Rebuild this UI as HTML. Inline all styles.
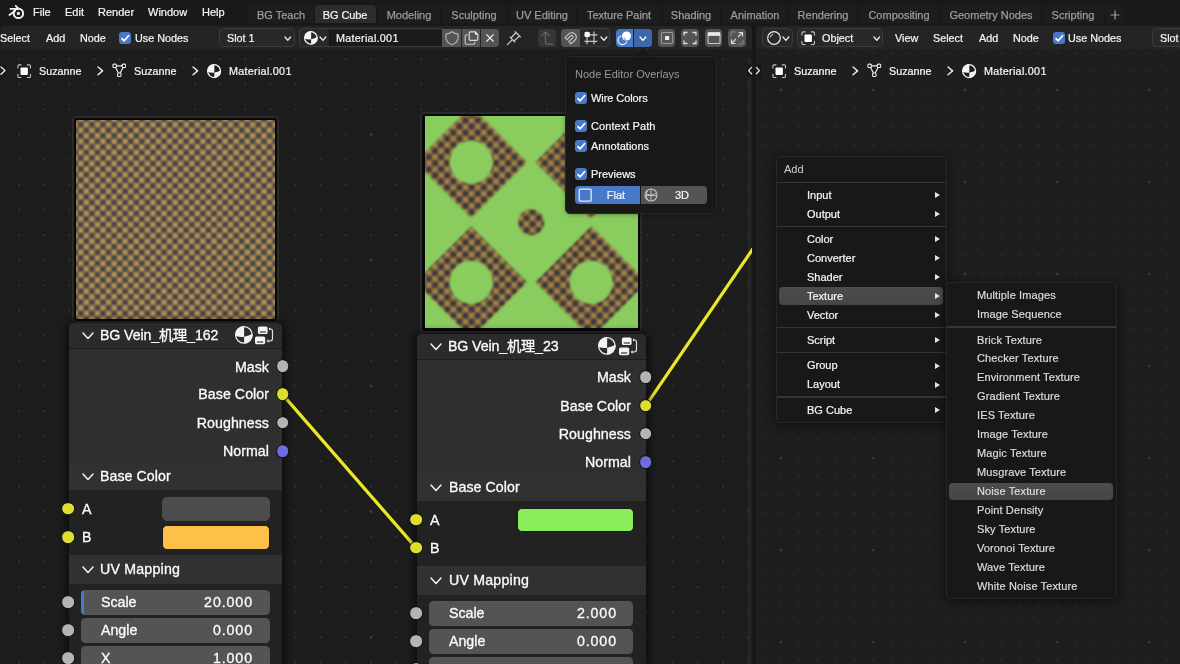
<!DOCTYPE html>
<html lang="en"><head><meta charset="utf-8"><title>Blender Node Editor</title>
<style>
*{box-sizing:border-box;margin:0;padding:0}
html,body{width:1180px;height:664px;overflow:hidden;background:#1d1d1d}
body{position:relative;font-family:"Liberation Sans","Noto Sans CJK SC",sans-serif;font-size:11px;color:#e6e6e6}
.a{position:absolute}
.t,.tr,.tc{position:absolute;white-space:nowrap;line-height:1;will-change:transform}
.t{transform:translateY(-50%)}
.tr{transform:translate(-100%,-50%)}
.tc{transform:translate(-50%,-50%)}
.h{font-size:10.8px;color:#f4f4f4;-webkit-text-stroke:0.22px #f4f4f4}
.m{color:#f4f4f4;-webkit-text-stroke:0.22px #f4f4f4}
.tabt{color:#9c9c9c;-webkit-text-stroke:0.25px #9c9c9c}
#top{left:0;top:0;width:1180px;height:27px;background:#191919}
.tab{position:absolute;top:5px;height:18px;border-radius:4px 4px 0 0;background:#1d1d1d}
.tab.on{background:#2c2c2c}
.hdr{position:absolute;top:26px;height:24px;background:#242424;border-bottom:0.6px solid #1f1f1f}
.ed{position:absolute;top:50px;height:614px;overflow:hidden}
.btn{position:absolute;background:#545454}
.dd{position:absolute;background:#282828;border:1.2px solid #3b3b3b;border-radius:4.5px}
.cb{position:absolute;width:12.4px;height:12.4px;border-radius:3px;background:#4878c8}
.node{position:absolute;background:#2f2f2f;border-radius:5px 5px 0 0;box-shadow:0 1px 9px 3px rgba(0,0,0,.6)}
.nh{position:absolute;left:0;right:0;top:0;height:25.6px;background:#2b2b2b;border-radius:5px 5px 0 0;border-bottom:1.4px solid #1d1d1d}
.ph{position:absolute;left:0;right:0;background:#313131}
.pc{position:absolute;left:0;right:0;background:#222222}
.nt{font-size:14.2px;color:#fcfcfc;-webkit-text-stroke:0.3px #fcfcfc}
.sock{position:absolute;width:13.7px;height:13.7px;border-radius:50%;border:1.25px solid #0b0b0b;transform:translate(-50%,-50%)}
.fld{position:absolute;background:#545454;border-radius:4.5px}
.menu{position:absolute;background:#181818;border:1px solid #272727;border-radius:4px;box-shadow:0 2px 9px 2px rgba(0,0,0,.4)}
.sep{position:absolute;height:1.4px;background:#363636}
.hl{position:absolute;background:linear-gradient(#4c4c4c,#464646);border-radius:4px}
.mi{color:#f4f4f4;-webkit-text-stroke:0.22px #f4f4f4}
.si{color:#dcdcdc;-webkit-text-stroke:0.2px #dcdcdc}
.arr{position:absolute;width:0;height:0;border-left:5.2px solid #e6e6e6;border-top:3.2px solid transparent;border-bottom:3.2px solid transparent;transform:translateY(-50%)}
.pv{position:absolute;background:#080808;border:2.3px solid #2a2a2a;border-radius:4.5px}
</style></head>
<body>
<div id="top" class="a"></div>
<svg class="a" style="left:8px;top:4px;" width="18" height="16" viewBox="0 0 18 16"><path d="M1.4 10.9 L7 6.9 M2.4 4.9 H8.6 M7.7 1.8 L10.4 4.6" fill="none" stroke="#f0f0f0" stroke-width="1.8" stroke-linecap="round" stroke-linejoin="round"/><circle cx="10.4" cy="9.4" r="4.7" fill="none" stroke="#f0f0f0" stroke-width="2"/><circle cx="10.4" cy="9.4" r="1.6" fill="#f0f0f0"/></svg>
<div class="t m" style="left:33px;top:12.1px;">File</div>
<div class="t m" style="left:65px;top:12.1px;">Edit</div>
<div class="t m" style="left:98px;top:12.1px;">Render</div>
<div class="t m" style="left:148px;top:12.1px;">Window</div>
<div class="t m" style="left:202px;top:12.1px;">Help</div>
<div class="tab" style="left:247.5px;top:5px;width:66.5px;height:18px;"></div>
<div class="tc tabt" style="left:280.75px;top:14.7px;">BG Teach</div>
<div class="tab on" style="left:315px;top:5px;width:61px;height:18px;"></div>
<div class="tc m" style="left:345.1px;top:14.7px;letter-spacing:-0.1px;">BG Cube</div>
<div class="tab" style="left:378px;top:5px;width:62px;height:18px;"></div>
<div class="tc tabt" style="left:409.0px;top:14.7px;">Modeling</div>
<div class="tab" style="left:442px;top:5px;width:64px;height:18px;"></div>
<div class="tc tabt" style="left:473.5px;top:14.7px;">Sculpting</div>
<div class="tab" style="left:508px;top:5px;width:68px;height:18px;"></div>
<div class="tc tabt" style="left:542.0px;top:14.7px;">UV Editing</div>
<div class="tab" style="left:578px;top:5px;width:83px;height:18px;"></div>
<div class="tc tabt" style="left:619.1px;top:14.7px;">Texture Paint</div>
<div class="tab" style="left:663px;top:5px;width:57px;height:18px;"></div>
<div class="tc tabt" style="left:690.7px;top:14.7px;">Shading</div>
<div class="tab" style="left:722px;top:5px;width:66px;height:18px;"></div>
<div class="tc tabt" style="left:754.7px;top:14.7px;">Animation</div>
<div class="tab" style="left:790px;top:5px;width:67px;height:18px;"></div>
<div class="tc tabt" style="left:823.3px;top:14.7px;">Rendering</div>
<div class="tab" style="left:859px;top:5px;width:80px;height:18px;"></div>
<div class="tc tabt" style="left:898.6px;top:14.7px;">Compositing</div>
<div class="tab" style="left:941px;top:5px;width:100px;height:18px;"></div>
<div class="tc tabt" style="left:990.5px;top:14.7px;">Geometry Nodes</div>
<div class="tab" style="left:1043px;top:5px;width:61px;height:18px;"></div>
<div class="tc tabt" style="left:1072.8px;top:14.7px;">Scripting</div>
<div class="tab" style="left:1106px;top:5px;width:18px;height:18px;"></div>
<svg class="a" style="left:1109px;top:8.8px;" width="12" height="12" viewBox="0 0 12 12"><path d="M6 1.6V10.4M1.6 6H10.4" stroke="#a0a0a0" stroke-width="1.2" fill="none"/></svg>
<div class="ed" style="left:0;width:752px;background-color:#1d1d1d;background-image:radial-gradient(circle at 50% 50%, #464646 0, #464646 0.8px, transparent 1.3px),radial-gradient(circle at 50% 50%, #313131 0, #313131 0.7px, transparent 1.2px);background-size:125.75px 125.75px,25.15px 25.15px;background-position:308.23px 21.57px,6.43px -3.57px;"></div>
<div class="ed" style="left:756px;width:424px;background-color:#1e1e1e;background-image:radial-gradient(circle at 50% 50%, #444444 0, #444444 0.8px, transparent 1.3px),radial-gradient(circle at 50% 50%, #2f2f2f 0, #2f2f2f 0.7px, transparent 1.2px);background-size:92.10000000000001px 92.10000000000001px,18.42px 18.42px;background-position:255.05px -6.25px,15.64px -6.16px;"></div>
<div class="a" style="left:752px;top:26px;width:4px;height:638px;background:#171717"></div>
<div class="a" style="left:747.7px;top:58px;width:3.8px;height:606px;background:#262626;border-radius:2px 2px 0 0"></div>
<div class="hdr" style="left:0.5px;width:751.5px;border-radius:4px 5px 0 0"></div>
<div class="hdr" style="left:756px;width:424px;border-radius:5px 0 0 0"></div>
<div class="t h" style="left:0px;top:37.9px;">Select</div>
<div class="t h" style="left:45.6px;top:37.9px;">Add</div>
<div class="t h" style="left:79.7px;top:37.9px;">Node</div>
<div class="cb" style="left:118.7px;top:31.7px"><svg width="12.4" height="12.4" viewBox="0 0 13 13" style="display:block"><path d="M3.1 6.9 L5.5 9.2 L10 3.9" fill="none" stroke="#fff" stroke-width="1.8" stroke-linecap="round" stroke-linejoin="round"/></svg></div>
<div class="t h" style="left:134.6px;top:37.9px;">Use Nodes</div>
<div class="dd" style="left:219.2px;top:28.4px;width:75.4px;height:18.8px;"></div>
<div class="t h" style="left:226.7px;top:37.9px;">Slot 1</div>
<svg class="a" style="left:283.2px;top:35.199999999999996px;" width="9.6" height="7.2" viewBox="0 0 9.6 7.2"><path d="M2 2 L4.8 5.2 L7.6 2" fill="none" stroke="#e6e6e6" stroke-width="1.4" stroke-linecap="round" stroke-linejoin="round"/></svg>
<div class="dd" style="left:299px;top:28.4px;width:143px;height:18.8px;border-radius:4px 0 0 4px"></div>
<div class="a" style="left:330.2px;top:29.6px;width:112px;height:16.4px;background:#1a1a1a"></div>
<svg class="a" style="left:302.6px;top:30.0px;" width="15.8" height="15.8" viewBox="0 0 15.8 15.8"><circle cx="7.9" cy="7.9" r="6.25" fill="none" stroke="#f4f4f4" stroke-width="1.3"/><path d="M8.1 9.35 L8.1 1.2999999999999998 A6.6000000000000005 6.6000000000000005 0 0 0 1.2999999999999998 7.9 L1.50 8.56 Q4.93 10.08 8.1 9.35 Z" fill="#f4f4f4"/><path d="M8.1 9.35 Q11.86 8.69 14.43 7.11 A6.6000000000000005 6.6000000000000005 0 0 1 8.1 14.5 Z" fill="#f4f4f4"/></svg>
<svg class="a" style="left:318.1px;top:34.99999999999999px;" width="9.8" height="7.4" viewBox="0 0 9.8 7.4"><path d="M2 2 L4.9 5.4 L7.8 2" fill="none" stroke="#e6e6e6" stroke-width="1.4" stroke-linecap="round" stroke-linejoin="round"/></svg>
<div class="a" style="left:329.2px;top:29.6px;width:1px;height:16.4px;background:#141414"></div>
<div class="t h" style="left:335.7px;top:37.9px;letter-spacing:0.27px;">Material.001</div>
<div class="btn" style="left:442.4px;top:29.2px;width:18.6px;height:17.5px;"></div>
<div class="btn" style="left:461.9px;top:29.2px;width:18.1px;height:17.5px;"></div>
<div class="btn" style="left:481px;top:29.2px;width:18.2px;height:17.5px;border-radius:0 4px 4px 0"></div>
<svg class="a" style="left:443.5px;top:30px;" width="16" height="16" viewBox="0 0 16 16"><path d="M8 1.7 Q10.6 3.9 14 4.1 V8 Q14 12.3 8 14.7 Q2 12.3 2 8 V4.1 Q5.4 3.9 8 1.7 Z" fill="none" stroke="#b4b4b4" stroke-width="1.15" stroke-linejoin="round"/></svg>
<svg class="a" style="left:462.6px;top:30px;" width="17" height="16" viewBox="0 0 17 16"><path d="M4.6 4.8H3.4Q2.2 4.8 2.2 6V13Q2.2 14.2 3.4 14.2H10.6Q11.8 14.2 11.8 13V12" fill="none" stroke="#c4c4c4" stroke-width="1.15"/><path d="M7.4 1.8H12.2L14.8 4.4V9.2Q14.8 10.4 13.6 10.4H7.4Q6.2 10.4 6.2 9.2V3Q6.2 1.8 7.4 1.8Z" fill="none" stroke="#dcdcdc" stroke-width="1.15" stroke-linejoin="round"/><path d="M12 1.6L15 4.7H12Z" fill="#f0f0f0"/></svg>
<svg class="a" style="left:482px;top:30px;" width="16" height="16" viewBox="0 0 16 16"><path d="M4.7 4.6L11.3 11.2M11.3 4.6L4.7 11.2" fill="none" stroke="#ececec" stroke-width="1.25" stroke-linecap="round"/></svg>
<svg class="a" style="left:505px;top:29px;" width="18" height="18" viewBox="0 0 18 18"><path d="M2.5 15.5L7 11M5 8.2L9.8 13M6 9L11 3.5L14.5 7L9 12M10.2 2.6L15.4 7.8" fill="none" stroke="#c8c8c8" stroke-width="1.2" stroke-linecap="round" stroke-linejoin="round"/></svg>
<div class="btn" style="left:538.2px;top:29.2px;width:17.8px;height:17.5px;border-radius:4px;background:#363636"></div>
<svg class="a" style="left:539.2px;top:30px;" width="16" height="16" viewBox="0 0 16 16"><path d="M2.6 5.6L6.5 1.9L10.4 5.6M6.5 2.2V12.4Q6.5 14.2 8.3 14.2H13.6" fill="none" stroke="#646464" stroke-width="1.25" stroke-linecap="round" stroke-linejoin="round"/></svg>
<div class="btn" style="left:561.4px;top:29.2px;width:18.2px;height:17.5px;border-radius:4px 0 0 4px"></div>
<svg class="a" style="left:561.3px;top:28.7px;" width="18.4" height="18.4" viewBox="0 0 16 16"><path d="M3.5 7.5L6.8 4.3Q9.6 1.8 12.2 4.4Q14.6 7.1 12 9.8L8.7 13L6.8 11L10 7.9Q11 6.8 10.1 5.9Q9.2 5.2 8.3 6L5.3 9.3Z" fill="none" stroke="#c8c8c8" stroke-width="1.0" stroke-linejoin="round"/></svg>
<div class="dd" style="left:579.6px;top:28.4px;width:30.2px;height:18.8px;border-radius:0 4px 4px 0;border-left:none"></div>
<svg class="a" style="left:583px;top:30px;" width="16" height="16" viewBox="0 0 16 16"><path d="M1.4 4.8H14.4M1.4 11.4H14.4M4 1.4V14.6M11 1.4V14.6" fill="none" stroke="#c8c8c8" stroke-width="1.15"/><rect x="1.6" y="2" width="5.2" height="5" rx="0.8" fill="#f4f4f4"/></svg>
<svg class="a" style="left:599.0px;top:35.099999999999994px;" width="9.8" height="7.4" viewBox="0 0 9.8 7.4"><path d="M2 2 L4.9 5.4 L7.8 2" fill="none" stroke="#e6e6e6" stroke-width="1.4" stroke-linecap="round" stroke-linejoin="round"/></svg>
<div class="btn" style="left:615.6px;top:29.2px;width:17.6px;height:17.5px;border-radius:4px 0 0 4px;background:#4878c8"></div>
<div class="btn" style="left:633.8px;top:29.2px;width:18px;height:17.5px;border-radius:0 4px 4px 0;background:#3f68ab"></div>
<svg class="a" style="left:616px;top:30px;" width="17" height="16" viewBox="0 0 17 16"><circle cx="6.4" cy="10.2" r="4.4" fill="none" stroke="#f0f4fc" stroke-width="1.2"/><circle cx="10.5" cy="6" r="5.6" fill="#4878c8"/><circle cx="10.5" cy="6" r="4.6" fill="#fff"/><path d="M7.6 7.4Q9.4 8.6 9.2 10" fill="none" stroke="#4878c8" stroke-width="0.9"/></svg>
<svg class="a" style="left:637.5px;top:34.99999999999999px;" width="9.8" height="7.4" viewBox="0 0 9.8 7.4"><path d="M2 2 L4.9 5.4 L7.8 2" fill="none" stroke="#fff" stroke-width="1.4" stroke-linecap="round" stroke-linejoin="round"/></svg>
<div class="btn" style="left:657.6px;top:29.2px;width:17.8px;height:17.5px;border-radius:4px"></div>
<div class="btn" style="left:681px;top:29.2px;width:17.8px;height:17.5px;border-radius:4px"></div>
<div class="btn" style="left:704.6px;top:29.2px;width:17.8px;height:17.5px;border-radius:4px"></div>
<div class="btn" style="left:728px;top:29.2px;width:17.8px;height:17.5px;border-radius:4px"></div>
<svg class="a" style="left:658.5px;top:30px;" width="16" height="16" viewBox="0 0 16 16"><rect x="2.5" y="2.5" width="11.2" height="11" rx="1.5" fill="none" stroke="#9a9a9a" stroke-width="1.1"/><rect x="6.1" y="6" width="4" height="4" fill="#f0f0f0"/></svg>
<svg class="a" style="left:681.9px;top:30px;" width="16" height="16" viewBox="0 0 16 16"><path d="M2 5.5V2.5H5.5M10.5 2.5H14V5.5M14 10.5V13.5H10.5M5.5 13.5H2V10.5" fill="none" stroke="#e0e0e0" stroke-width="1.3"/></svg>
<svg class="a" style="left:705.5px;top:30px;" width="16" height="16" viewBox="0 0 16 16"><rect x="2" y="2.5" width="12" height="11" rx="1" fill="none" stroke="#c8c8c8" stroke-width="1.1"/><rect x="2" y="2.5" width="12" height="3.4" fill="#e8e8e8"/></svg>
<svg class="a" style="left:728.9px;top:30px;" width="16" height="16" viewBox="0 0 16 16"><path d="M9.5 2.5H13.5V6.5M13.5 2.5L9 7M6.5 13.5H2.5V9.5M2.5 13.5L7 9" fill="none" stroke="#d8d8d8" stroke-width="1.2"/><path d="M2 6V2H6.5M14 10V14H9.5" fill="none" stroke="#8a8a8a" stroke-width="1"/></svg>
<div class="dd" style="left:762px;top:28.4px;width:30.6px;height:18.8px;"></div>
<svg class="a" style="left:765.5px;top:30px;" width="16" height="16" viewBox="0 0 16 16"><circle cx="8" cy="8" r="6.3" fill="none" stroke="#ececec" stroke-width="1.2"/><path d="M4.2 7.4Q4.6 4.8 7.2 4.3" fill="none" stroke="#ececec" stroke-width="1"/></svg>
<svg class="a" style="left:781.4px;top:34.99999999999999px;" width="9.8" height="7.4" viewBox="0 0 9.8 7.4"><path d="M2 2 L4.9 5.4 L7.8 2" fill="none" stroke="#e6e6e6" stroke-width="1.4" stroke-linecap="round" stroke-linejoin="round"/></svg>
<div class="dd" style="left:797px;top:28.4px;width:86px;height:18.8px;"></div>
<svg class="a" style="left:801.1999999999999px;top:30.7px;" width="14.4" height="14.4" viewBox="0 0 16 16"><rect x="3.9" y="3.9" width="8.2" height="8.2" rx="1" fill="#ffffff"/><path d="M1 4.5V2.4Q1 1 2.4 1H4.5M11.5 1H13.6Q15 1 15 2.4V4.5M15 11.5V13.6Q15 15 13.6 15H11.5M4.5 15H2.4Q1 15 1 13.6V11.5" fill="none" stroke="#c4c4c4" stroke-width="1.2" stroke-linecap="round"/></svg>
<div class="t h" style="left:822px;top:37.9px;">Object</div>
<svg class="a" style="left:872.2px;top:35.199999999999996px;" width="9.6" height="7.2" viewBox="0 0 9.6 7.2"><path d="M2 2 L4.8 5.2 L7.6 2" fill="none" stroke="#e6e6e6" stroke-width="1.4" stroke-linecap="round" stroke-linejoin="round"/></svg>
<div class="t h" style="left:894.7px;top:37.9px;">View</div>
<div class="t h" style="left:932.7px;top:37.9px;">Select</div>
<div class="t h" style="left:978.7px;top:37.9px;">Add</div>
<div class="t h" style="left:1012.7px;top:37.9px;">Node</div>
<div class="cb" style="left:1052.5px;top:31.7px"><svg width="12.4" height="12.4" viewBox="0 0 13 13" style="display:block"><path d="M3.1 6.9 L5.5 9.2 L10 3.9" fill="none" stroke="#fff" stroke-width="1.8" stroke-linecap="round" stroke-linejoin="round"/></svg></div>
<div class="t h" style="left:1067.7px;top:37.9px;">Use Nodes</div>
<div class="dd" style="left:1152px;top:28.4px;width:40px;height:18.8px;"></div>
<div class="t h" style="left:1159.7px;top:37.9px;">Slot</div>
<div class="a" style="left:0;top:63.5px;width:7px;height:13.5px;background:#191919;border-radius:0 3px 3px 0"></div>
<svg class="a" style="left:-1.2000000000000002px;top:65.10000000000001px;" width="8.0" height="11.2" viewBox="0 0 8.0 11.2"><path d="M2 2 L6.0 5.6 L2 9.2" fill="none" stroke="#ececec" stroke-width="1.4" stroke-linecap="round" stroke-linejoin="round"/></svg>
<svg class="a" style="left:17.400000000000002px;top:63.5px;" width="14.4" height="14.4" viewBox="0 0 16 16"><rect x="3.9" y="3.9" width="8.2" height="8.2" rx="1" fill="#ffffff"/><path d="M1 4.5V2.4Q1 1 2.4 1H4.5M11.5 1H13.6Q15 1 15 2.4V4.5M15 11.5V13.6Q15 15 13.6 15H11.5M4.5 15H2.4Q1 15 1 13.6V11.5" fill="none" stroke="#c4c4c4" stroke-width="1.2" stroke-linecap="round"/></svg>
<div class="t h" style="left:39.3px;top:70.7px;">Suzanne</div>
<svg class="a" style="left:96.10000000000001px;top:64.8px;" width="8.6" height="11.8" viewBox="0 0 8.6 11.8"><path d="M2 2 L6.6 5.9 L2 9.8" fill="none" stroke="#ececec" stroke-width="1.4" stroke-linecap="round" stroke-linejoin="round"/></svg>
<svg class="a" style="left:111.7px;top:63.400000000000006px;" width="14.6" height="14.6" viewBox="0 0 16 16"><path d="M3 3.2H13M3.2 3.5L8 13M12.8 3.5L8 13" fill="none" stroke="#ececec" stroke-width="1.3"/><rect x="1" y="1.2" width="3.8" height="3.8" rx="1.1" fill="#1d1d1d" stroke="#ececec" stroke-width="1.2"/><rect x="11.2" y="1.2" width="3.8" height="3.8" rx="1.1" fill="#1d1d1d" stroke="#ececec" stroke-width="1.2"/><rect x="6.1" y="11" width="3.8" height="3.8" rx="1.1" fill="#1d1d1d" stroke="#ececec" stroke-width="1.2"/></svg>
<div class="t h" style="left:134.2px;top:70.7px;">Suzanne</div>
<svg class="a" style="left:191.29999999999998px;top:64.8px;" width="8.6" height="11.8" viewBox="0 0 8.6 11.8"><path d="M2 2 L6.6 5.9 L2 9.8" fill="none" stroke="#ececec" stroke-width="1.4" stroke-linecap="round" stroke-linejoin="round"/></svg>
<svg class="a" style="left:205.70000000000002px;top:62.6px;" width="16.2" height="16.2" viewBox="0 0 16.2 16.2"><circle cx="8.1" cy="8.1" r="6.449999999999999" fill="none" stroke="#f4f4f4" stroke-width="1.3"/><path d="M8.299999999999999 9.60 L8.299999999999999 1.2999999999999998 A6.8 6.8 0 0 0 1.2999999999999998 8.1 L1.50 8.78 Q5.04 10.34 8.299999999999999 9.60 Z" fill="#f4f4f4"/><path d="M8.299999999999999 9.60 Q12.18 8.92 14.83 7.28 A6.8 6.8 0 0 1 8.299999999999999 14.899999999999999 Z" fill="#f4f4f4"/></svg>
<div class="t h" style="left:229px;top:70.7px;letter-spacing:0.27px;">Material.001</div>
<div class="a" style="left:746.5px;top:63.5px;width:15.5px;height:13.5px;background:#181818;border-radius:3px"></div>
<svg class="a" style="left:746px;top:64px;" width="16" height="13" viewBox="0 0 16 13"><path d="M5.6 3.4L2.6 6.6L5.6 9.8M10.4 3.4L13.4 6.6L10.4 9.8" fill="none" stroke="#ececec" stroke-width="1.3" stroke-linecap="round" stroke-linejoin="round"/></svg>
<svg class="a" style="left:772.4px;top:63.5px;" width="14.4" height="14.4" viewBox="0 0 16 16"><rect x="3.9" y="3.9" width="8.2" height="8.2" rx="1" fill="#ffffff"/><path d="M1 4.5V2.4Q1 1 2.4 1H4.5M11.5 1H13.6Q15 1 15 2.4V4.5M15 11.5V13.6Q15 15 13.6 15H11.5M4.5 15H2.4Q1 15 1 13.6V11.5" fill="none" stroke="#c4c4c4" stroke-width="1.2" stroke-linecap="round"/></svg>
<div class="t h" style="left:794px;top:70.7px;">Suzanne</div>
<svg class="a" style="left:851.3000000000001px;top:64.8px;" width="8.6" height="11.8" viewBox="0 0 8.6 11.8"><path d="M2 2 L6.6 5.9 L2 9.8" fill="none" stroke="#ececec" stroke-width="1.4" stroke-linecap="round" stroke-linejoin="round"/></svg>
<svg class="a" style="left:867.0px;top:63.400000000000006px;" width="14.6" height="14.6" viewBox="0 0 16 16"><path d="M3 3.2H13M3.2 3.5L8 13M12.8 3.5L8 13" fill="none" stroke="#ececec" stroke-width="1.3"/><rect x="1" y="1.2" width="3.8" height="3.8" rx="1.1" fill="#1e1e1e" stroke="#ececec" stroke-width="1.2"/><rect x="11.2" y="1.2" width="3.8" height="3.8" rx="1.1" fill="#1e1e1e" stroke="#ececec" stroke-width="1.2"/><rect x="6.1" y="11" width="3.8" height="3.8" rx="1.1" fill="#1e1e1e" stroke="#ececec" stroke-width="1.2"/></svg>
<div class="t h" style="left:889px;top:70.7px;">Suzanne</div>
<svg class="a" style="left:946.1px;top:64.8px;" width="8.6" height="11.8" viewBox="0 0 8.6 11.8"><path d="M2 2 L6.6 5.9 L2 9.8" fill="none" stroke="#ececec" stroke-width="1.4" stroke-linecap="round" stroke-linejoin="round"/></svg>
<svg class="a" style="left:960.9px;top:62.6px;" width="16.2" height="16.2" viewBox="0 0 16.2 16.2"><circle cx="8.1" cy="8.1" r="6.449999999999999" fill="none" stroke="#f4f4f4" stroke-width="1.3"/><path d="M8.299999999999999 9.60 L8.299999999999999 1.2999999999999998 A6.8 6.8 0 0 0 1.2999999999999998 8.1 L1.50 8.78 Q5.04 10.34 8.299999999999999 9.60 Z" fill="#f4f4f4"/><path d="M8.299999999999999 9.60 Q12.18 8.92 14.83 7.28 A6.8 6.8 0 0 1 8.299999999999999 14.899999999999999 Z" fill="#f4f4f4"/></svg>
<div class="t h" style="left:983.8px;top:70.7px;letter-spacing:0.27px;">Material.001</div>
<svg class="a" style="left:0;top:50px" width="751.6" height="614" viewBox="0 50 751.6 614"><line x1="282.4" y1="394.4" x2="416.4" y2="548.1" stroke="#1a1a08" stroke-width="4.7"/><line x1="282.4" y1="394.4" x2="416.4" y2="548.1" stroke="#e6e62e" stroke-width="3.3"/><line x1="645.8" y1="405.6" x2="753" y2="248.6" stroke="#1a1a08" stroke-width="4.7"/><line x1="645.8" y1="405.6" x2="753" y2="248.6" stroke="#e6e62e" stroke-width="3.3"/></svg>
<div class="pv" style="left:72.1px;top:115.5px;width:207.1px;height:207.3px"></div>
<svg class="a" style="left:76.3px;top:119.7px" width="198.7" height="198.9" viewBox="0 0 198.7 198.9"><defs><pattern id="chk" x="2.025" y="1.9250000000000003" width="11.1" height="11.1" patternUnits="userSpaceOnUse"><rect width="11.1" height="11.1" fill="#8b744c"/><rect x="0.000" y="0.777" width="5.550" height="3.996" fill="#424248"/><rect x="0.777" y="0.000" width="3.996" height="5.550" fill="#424248"/><rect x="5.550" y="6.327" width="5.550" height="3.996" fill="#424248"/><rect x="6.327" y="5.550" width="3.996" height="5.550" fill="#424248"/><rect x="6.660" y="1.110" width="3.330" height="3.330" fill="#c9a25a"/><rect x="1.110" y="6.660" width="3.330" height="3.330" fill="#c9a25a"/></pattern><filter id="bl" x="-5%" y="-5%" width="110%" height="110%"><feGaussianBlur stdDeviation="0.9"/></filter></defs><rect width="198.7" height="198.9" fill="#8b744c"/><g filter="url(#bl)"><rect x="-10" y="-10" width="230" height="230" fill="url(#chk)"/></g></svg>
<div class="node" style="left:68.6px;top:323.3px;width:213.79999999999998px;height:352.7px">
<div class="nh"></div>
<div class="ph" style="top:138.7px;height:28.399999999999977px"></div>
<div class="pc" style="top:167.09999999999997px;height:64.60000000000002px"></div>
<div class="ph" style="top:231.7px;height:29px"></div>
<div class="pc" style="top:260.7px;height:200px"></div>
</div>
<svg class="a" style="left:80.5px;top:331.0px;" width="14" height="9.4" viewBox="0 0 14 9.4"><path d="M2 2 L7 7.4 L12 2" fill="none" stroke="#f2f2f2" stroke-width="1.5" stroke-linecap="round" stroke-linejoin="round"/></svg>
<div class="t nt" style="left:99.8px;top:335.3px;letter-spacing:-0.12px;">BG Vein_机理_162</div>
<svg class="a" style="left:233.49999999999997px;top:325.3px;" width="19.8" height="19.8" viewBox="0 0 19.8 19.8"><circle cx="9.9" cy="9.9" r="8.25" fill="none" stroke="#f2f2f2" stroke-width="1.3"/><path d="M10.1 11.79 L10.1 1.3000000000000007 A8.6 8.6 0 0 0 1.3000000000000007 9.9 L1.56 10.76 Q6.03 12.74 10.1 11.79 Z" fill="#f2f2f2"/><path d="M10.1 11.79 Q15.06 10.93 18.41 8.87 A8.6 8.6 0 0 1 10.1 18.5 Z" fill="#f2f2f2"/></svg>
<svg class="a" style="left:254.2px;top:325.8px;" width="20" height="19" viewBox="0 0 20 19"><rect x="3.9" y="0.4" width="9.7" height="7.7" rx="1.7" fill="#f4f4f4"/><rect x="1" y="10.6" width="10.2" height="7.7" rx="1.7" fill="#f4f4f4"/><rect x="5.7" y="5.2" width="6.2" height="1.6" fill="#6a6a6a"/><rect x="2.9" y="15.2" width="6.4" height="1.6" fill="#6a6a6a"/><path d="M15.2 3H16.6Q18.5 3 18.5 4.9V12.6Q18.5 15 16.2 15H14.2" fill="none" stroke="#e4e4e4" stroke-width="1.15"/><path d="M15 1.4L16.8 3L15 4.6Z M14.6 13.2L12.7 15L14.6 16.8Z" fill="#f0f0f0"/></svg>
<div class="tr nt" style="left:268.95px;top:366.5px;letter-spacing:0.05px;">Mask</div>
<div class="sock" style="left:282.5px;top:366.4px;background:#b4b4b4"></div>
<div class="tr nt" style="left:268.95px;top:394.3px;letter-spacing:0.05px;">Base Color</div>
<div class="sock" style="left:282.5px;top:394.2px;background:#dede30"></div>
<div class="tr nt" style="left:268.95px;top:422.7px;letter-spacing:0.05px;">Roughness</div>
<div class="sock" style="left:282.5px;top:422.59999999999997px;background:#b4b4b4"></div>
<div class="tr nt" style="left:268.95px;top:451.0px;letter-spacing:0.05px;">Normal</div>
<div class="sock" style="left:282.5px;top:450.9px;background:#6c6cde"></div>
<svg class="a" style="left:80.5px;top:471.9px;" width="14" height="9.4" viewBox="0 0 14 9.4"><path d="M2 2 L7 7.4 L12 2" fill="none" stroke="#f2f2f2" stroke-width="1.5" stroke-linecap="round" stroke-linejoin="round"/></svg>
<div class="t nt" style="left:100.1px;top:475.9px;letter-spacing:0.05px;">Base Color</div>
<div class="sock" style="left:67.99999999999999px;top:508.7px;background:#dede30"></div>
<div class="sock" style="left:67.99999999999999px;top:537.1px;background:#dede30"></div>
<div class="t nt" style="left:81.6px;top:509px;">A</div>
<div class="t nt" style="left:82.0px;top:537.4px;">B</div>
<div class="fld" style="left:162.3px;top:496.8px;width:107.59999999999997px;height:24.4px;background:#4c4c4c;border:1px solid #4c4c4c;border-radius:5px"></div>
<div class="fld" style="left:162.3px;top:525.1999999999999px;width:107.59999999999997px;height:24.4px;background:#ffc048;border:1px solid #1c1c1c;border-radius:5px"></div>
<svg class="a" style="left:80.5px;top:565.1999999999999px;" width="14" height="9.4" viewBox="0 0 14 9.4"><path d="M2 2 L7 7.4 L12 2" fill="none" stroke="#f2f2f2" stroke-width="1.5" stroke-linecap="round" stroke-linejoin="round"/></svg>
<div class="t nt" style="left:100.1px;top:569.2px;letter-spacing:0.2px;">UV Mapping</div>
<div class="sock" style="left:67.99999999999999px;top:602.3000000000001px;background:#b4b4b4"></div>
<div class="fld" style="left:81.4px;top:590.1px;width:188.49999999999997px;height:24.8px;overflow:hidden"><div style="position:absolute;left:0;top:0;bottom:0;width:2.6px;background:#4878c8"></div></div>
<div class="t nt" style="left:101.4px;top:602.4px;">Scale</div>
<div class="tr nt" style="left:253.41999999999996px;top:602.4px;letter-spacing:0.92px;">20.000</div>
<div class="sock" style="left:67.99999999999999px;top:630.3000000000001px;background:#b4b4b4"></div>
<div class="fld" style="left:81.4px;top:618.1px;width:188.49999999999997px;height:24.8px;overflow:hidden"></div>
<div class="t nt" style="left:101.4px;top:630.4px;">Angle</div>
<div class="tr nt" style="left:253.41999999999996px;top:630.4px;letter-spacing:0.92px;">0.000</div>
<div class="sock" style="left:67.99999999999999px;top:658.3000000000001px;background:#b4b4b4"></div>
<div class="fld" style="left:81.4px;top:646.1px;width:188.49999999999997px;height:24.8px;overflow:hidden"></div>
<div class="t nt" style="left:101.4px;top:658.4px;">X</div>
<div class="tr nt" style="left:253.41999999999996px;top:658.4px;letter-spacing:0.92px;">1.000</div>
<div class="pv" style="left:420.3px;top:111.6px;width:221.8px;height:221.0px"></div>
<svg class="a" style="left:424.5px;top:115.8px" width="213.4" height="212.6" viewBox="0 0 213.4 212.6"><defs><pattern id="chk2" x="6.95" y="7.45" width="12.2" height="12.2" patternUnits="userSpaceOnUse"><rect width="12.2" height="12.2" fill="#7e663e"/><rect x="0.000" y="1.342" width="6.100" height="3.416" fill="#38363c"/><rect x="1.342" y="0.000" width="3.416" height="6.100" fill="#38363c"/><rect x="6.100" y="7.442" width="6.100" height="3.416" fill="#38363c"/><rect x="7.442" y="6.100" width="3.416" height="6.100" fill="#38363c"/><rect x="7.381" y="1.281" width="3.538" height="3.538" fill="#b48e4a"/><rect x="1.281" y="7.381" width="3.538" height="3.538" fill="#b48e4a"/></pattern><filter id="bl2" x="-5%" y="-5%" width="110%" height="110%"><feGaussianBlur stdDeviation="0.9"/></filter><filter id="bl3" x="-5%" y="-5%" width="110%" height="110%"><feGaussianBlur stdDeviation="1.2"/></filter><mask id="m2"><rect width="213.4" height="212.6" fill="#000"/><g fill="#fff" filter="url(#bl3)"><path fill-rule="evenodd" d="M-9.5 46.3L46.2 -9.400000000000006L101.9 46.3L46.2 102.0Z M24.500000000000004 46.3a21.7 21.7 0 1 0 43.4 0a21.7 21.7 0 1 0 -43.4 0Z"/><path fill-rule="evenodd" d="M-9.5 166.3L46.2 110.60000000000001L101.9 166.3L46.2 222.0Z M24.500000000000004 166.3a21.7 21.7 0 1 0 43.4 0a21.7 21.7 0 1 0 -43.4 0Z"/><path fill-rule="evenodd" d="M110.49999999999999 46.3L166.2 -9.400000000000006L221.89999999999998 46.3L166.2 102.0Z M144.5 46.3a21.7 21.7 0 1 0 43.4 0a21.7 21.7 0 1 0 -43.4 0Z"/><path fill-rule="evenodd" d="M110.49999999999999 166.3L166.2 110.60000000000001L221.89999999999998 166.3L166.2 222.0Z M144.5 166.3a21.7 21.7 0 1 0 43.4 0a21.7 21.7 0 1 0 -43.4 0Z"/><circle cx="106.2" cy="106.3" r="13"/></g></mask></defs><rect width="213.4" height="212.6" fill="#8acd5e"/><g mask="url(#m2)"><rect width="213.4" height="212.6" fill="#7e663e"/><rect x="-5" y="-5" width="223.4" height="222.6" fill="url(#chk2)" filter="url(#bl2)"/></g></svg>
<div class="node" style="left:417px;top:334px;width:229px;height:342px">
<div class="nh"></div>
<div class="ph" style="top:139px;height:28px"></div>
<div class="pc" style="top:167px;height:65.39999999999998px"></div>
<div class="ph" style="top:232.39999999999998px;height:28.300000000000068px"></div>
<div class="pc" style="top:260.70000000000005px;height:200px"></div>
</div>
<svg class="a" style="left:428.9px;top:341.7px;" width="14" height="9.4" viewBox="0 0 14 9.4"><path d="M2 2 L7 7.4 L12 2" fill="none" stroke="#f2f2f2" stroke-width="1.5" stroke-linecap="round" stroke-linejoin="round"/></svg>
<div class="t nt" style="left:448.2px;top:346.0px;letter-spacing:-0.12px;">BG Vein_机理_23</div>
<svg class="a" style="left:597.1px;top:336.0px;" width="19.8" height="19.8" viewBox="0 0 19.8 19.8"><circle cx="9.9" cy="9.9" r="8.25" fill="none" stroke="#f2f2f2" stroke-width="1.3"/><path d="M10.1 11.79 L10.1 1.3000000000000007 A8.6 8.6 0 0 0 1.3000000000000007 9.9 L1.56 10.76 Q6.03 12.74 10.1 11.79 Z" fill="#f2f2f2"/><path d="M10.1 11.79 Q15.06 10.93 18.41 8.87 A8.6 8.6 0 0 1 10.1 18.5 Z" fill="#f2f2f2"/></svg>
<svg class="a" style="left:617.8px;top:336.5px;" width="20" height="19" viewBox="0 0 20 19"><rect x="3.9" y="0.4" width="9.7" height="7.7" rx="1.7" fill="#f4f4f4"/><rect x="1" y="10.6" width="10.2" height="7.7" rx="1.7" fill="#f4f4f4"/><rect x="5.7" y="5.2" width="6.2" height="1.6" fill="#6a6a6a"/><rect x="2.9" y="15.2" width="6.4" height="1.6" fill="#6a6a6a"/><path d="M15.2 3H16.6Q18.5 3 18.5 4.9V12.6Q18.5 15 16.2 15H14.2" fill="none" stroke="#e4e4e4" stroke-width="1.15"/><path d="M15 1.4L16.8 3L15 4.6Z M14.6 13.2L12.7 15L14.6 16.8Z" fill="#f0f0f0"/></svg>
<div class="tr nt" style="left:631.4499999999999px;top:377.40000000000003px;letter-spacing:0.05px;">Mask</div>
<div class="sock" style="left:645.8000000000001px;top:377.3px;background:#b4b4b4"></div>
<div class="tr nt" style="left:631.4499999999999px;top:405.6px;letter-spacing:0.05px;">Base Color</div>
<div class="sock" style="left:645.8000000000001px;top:405.5px;background:#dede30"></div>
<div class="tr nt" style="left:631.4499999999999px;top:433.8px;letter-spacing:0.05px;">Roughness</div>
<div class="sock" style="left:645.8000000000001px;top:433.7px;background:#b4b4b4"></div>
<div class="tr nt" style="left:631.4499999999999px;top:462.0px;letter-spacing:0.05px;">Normal</div>
<div class="sock" style="left:645.8000000000001px;top:461.9px;background:#6c6cde"></div>
<svg class="a" style="left:428.9px;top:482.7px;" width="14" height="9.4" viewBox="0 0 14 9.4"><path d="M2 2 L7 7.4 L12 2" fill="none" stroke="#f2f2f2" stroke-width="1.5" stroke-linecap="round" stroke-linejoin="round"/></svg>
<div class="t nt" style="left:448.5px;top:486.7px;letter-spacing:0.05px;">Base Color</div>
<div class="sock" style="left:416.40000000000003px;top:519.5px;background:#dede30"></div>
<div class="sock" style="left:416.40000000000003px;top:547.8000000000001px;background:#dede30"></div>
<div class="t nt" style="left:430px;top:519.8px;">A</div>
<div class="t nt" style="left:430.4px;top:548.1px;">B</div>
<div class="fld" style="left:517px;top:507.59999999999997px;width:116.5px;height:24.4px;background:#8aee5c;border:1px solid #1c1c1c;border-radius:5px"></div>
<svg class="a" style="left:428.9px;top:576.2499999999999px;" width="14" height="9.4" viewBox="0 0 14 9.4"><path d="M2 2 L7 7.4 L12 2" fill="none" stroke="#f2f2f2" stroke-width="1.5" stroke-linecap="round" stroke-linejoin="round"/></svg>
<div class="t nt" style="left:448.5px;top:580.25px;letter-spacing:0.2px;">UV Mapping</div>
<div class="sock" style="left:416.40000000000003px;top:613.2px;background:#b4b4b4"></div>
<div class="fld" style="left:429.2px;top:601.0px;width:204.3px;height:24.8px;overflow:hidden"></div>
<div class="t nt" style="left:449.2px;top:613.3px;">Scale</div>
<div class="tr nt" style="left:617.02px;top:613.3px;letter-spacing:0.92px;">2.000</div>
<div class="sock" style="left:416.40000000000003px;top:641.3000000000001px;background:#b4b4b4"></div>
<div class="fld" style="left:429.2px;top:629.1px;width:204.3px;height:24.8px;overflow:hidden"></div>
<div class="t nt" style="left:449.2px;top:641.4px;">Angle</div>
<div class="tr nt" style="left:617.02px;top:641.4px;letter-spacing:0.92px;">0.000</div>
<div class="sock" style="left:416.40000000000003px;top:669.4000000000001px;background:#b4b4b4"></div>
<div class="fld" style="left:429.2px;top:657.2px;width:204.3px;height:24.8px;overflow:hidden"></div>
<div class="t nt" style="left:449.2px;top:669.5px;">X</div>
<div class="tr nt" style="left:617.02px;top:669.5px;letter-spacing:0.92px;">1.000</div>
<div class="menu" style="left:565px;top:55.5px;width:151.6px;height:158.4px;border-radius:5px;box-shadow:0 1px 4px rgba(0,0,0,.3)"></div>
<svg class="a" style="left:632.6px;top:45.8px;" width="20" height="11" viewBox="0 0 20 11"><path d="M0.4 10.6L10 1L19.6 10.6" fill="#181818" stroke="#272727" stroke-width="1"/></svg>
<div class="t " style="left:575.2px;top:74.1px;color:#9a9a9a">Node Editor Overlays</div>
<div class="cb" style="left:575px;top:91.6px"><svg width="12.4" height="12.4" viewBox="0 0 13 13" style="display:block"><path d="M3.1 6.9 L5.5 9.2 L10 3.9" fill="none" stroke="#fff" stroke-width="1.8" stroke-linecap="round" stroke-linejoin="round"/></svg></div>
<div class="t m" style="left:591.3px;top:97.8px;letter-spacing:-0.08px;">Wire Colors</div>
<div class="cb" style="left:575px;top:119.6px"><svg width="12.4" height="12.4" viewBox="0 0 13 13" style="display:block"><path d="M3.1 6.9 L5.5 9.2 L10 3.9" fill="none" stroke="#fff" stroke-width="1.8" stroke-linecap="round" stroke-linejoin="round"/></svg></div>
<div class="t m" style="left:591.3px;top:125.8px;letter-spacing:0.08px;">Context Path</div>
<div class="cb" style="left:575px;top:140.0px"><svg width="12.4" height="12.4" viewBox="0 0 13 13" style="display:block"><path d="M3.1 6.9 L5.5 9.2 L10 3.9" fill="none" stroke="#fff" stroke-width="1.8" stroke-linecap="round" stroke-linejoin="round"/></svg></div>
<div class="t m" style="left:591.3px;top:146.20000000000002px;">Annotations</div>
<div class="cb" style="left:575px;top:167.79999999999998px"><svg width="12.4" height="12.4" viewBox="0 0 13 13" style="display:block"><path d="M3.1 6.9 L5.5 9.2 L10 3.9" fill="none" stroke="#fff" stroke-width="1.8" stroke-linecap="round" stroke-linejoin="round"/></svg></div>
<div class="t m" style="left:591.3px;top:174.0px;">Previews</div>
<div class="btn" style="left:575px;top:186.4px;width:65.3px;height:17.9px;background:#4878c8;border-radius:4px 0 0 4px"></div>
<div class="btn" style="left:640.9px;top:186.4px;width:66px;height:17.9px;background:#545454;border-radius:0 4px 4px 0"></div>
<svg class="a" style="left:578px;top:188.2px;" width="14.4" height="14.4" viewBox="0 0 14 14"><rect x="1.2" y="1.2" width="11.6" height="11.6" rx="1" fill="none" stroke="#f0f0f0" stroke-width="1.2"/></svg>
<div class="tc m" style="left:616px;top:195.4px;">Flat</div>
<svg class="a" style="left:644.2px;top:188.4px;" width="14" height="14" viewBox="0 0 14 14"><circle cx="7" cy="7" r="6" fill="none" stroke="#c0c0c0" stroke-width="1.1"/><path d="M7 1V13M1 7.6H13M1.5 5Q7 9 12.5 5M4 2Q0.5 7 4 12" fill="none" stroke="#c0c0c0" stroke-width="1"/></svg>
<div class="tc m" style="left:681.5px;top:195.4px;">3D</div>
<div class="menu" style="left:775.5px;top:155.6px;width:171.5px;height:267px"></div>
<div class="t " style="left:784px;top:169.3px;color:#d0d0d0">Add</div>
<div class="sep" style="left:776.5px;top:181.5px;width:169.5px"></div>
<div class="sep" style="left:776.5px;top:225.9px;width:169.5px"></div>
<div class="sep" style="left:776.5px;top:326.8px;width:169.5px"></div>
<div class="sep" style="left:776.5px;top:351.8px;width:169.5px"></div>
<div class="sep" style="left:776.5px;top:396.40000000000003px;width:169.5px"></div>
<div class="hl" style="left:779.2px;top:287.3px;width:164px;height:17.4px;"></div>
<div class="t mi" style="left:807px;top:194.8px;">Input</div>
<div class="arr" style="left:934.6px;top:195.0px"></div>
<div class="t mi" style="left:807px;top:213.9px;">Output</div>
<div class="arr" style="left:934.6px;top:214.1px"></div>
<div class="t mi" style="left:807px;top:239.1px;">Color</div>
<div class="arr" style="left:934.6px;top:239.29999999999998px"></div>
<div class="t mi" style="left:807px;top:258.09999999999997px;">Converter</div>
<div class="arr" style="left:934.6px;top:258.3px"></div>
<div class="t mi" style="left:807px;top:277.09999999999997px;">Shader</div>
<div class="arr" style="left:934.6px;top:277.3px"></div>
<div class="t mi" style="left:807px;top:295.9px;">Texture</div>
<div class="arr" style="left:934.6px;top:296.1px"></div>
<div class="t mi" style="left:807px;top:314.9px;">Vector</div>
<div class="arr" style="left:934.6px;top:315.1px"></div>
<div class="t mi" style="left:807px;top:340.2px;">Script</div>
<div class="arr" style="left:934.6px;top:340.40000000000003px"></div>
<div class="t mi" style="left:807px;top:365.4px;">Group</div>
<div class="arr" style="left:934.6px;top:365.6px"></div>
<div class="t mi" style="left:807px;top:384.4px;">Layout</div>
<div class="arr" style="left:934.6px;top:384.6px"></div>
<div class="t mi" style="left:807px;top:409.59999999999997px;">BG Cube</div>
<div class="arr" style="left:934.6px;top:409.8px"></div>
<div class="menu" style="left:946px;top:281.8px;width:171px;height:317px"></div>
<div class="sep" style="left:947px;top:326.40000000000003px;width:169px"></div>
<div class="hl" style="left:949.2px;top:482.7px;width:164px;height:17.4px;"></div>
<div class="t si" style="left:977px;top:295.4px;letter-spacing:0.12px;">Multiple Images</div>
<div class="t si" style="left:977px;top:314.2px;letter-spacing:0.12px;">Image Sequence</div>
<div class="t si" style="left:977px;top:339.5px;letter-spacing:0.12px;">Brick Texture</div>
<div class="t si" style="left:977px;top:358.45px;letter-spacing:0.12px;">Checker Texture</div>
<div class="t si" style="left:977px;top:377.4px;letter-spacing:0.12px;">Environment Texture</div>
<div class="t si" style="left:977px;top:396.35px;letter-spacing:0.12px;">Gradient Texture</div>
<div class="t si" style="left:977px;top:415.3px;letter-spacing:0.12px;">IES Texture</div>
<div class="t si" style="left:977px;top:434.25px;letter-spacing:0.12px;">Image Texture</div>
<div class="t si" style="left:977px;top:453.2px;letter-spacing:0.12px;">Magic Texture</div>
<div class="t si" style="left:977px;top:472.15px;letter-spacing:0.12px;">Musgrave Texture</div>
<div class="t si" style="left:977px;top:491.1px;letter-spacing:0.12px;">Noise Texture</div>
<div class="t si" style="left:977px;top:510.04999999999995px;letter-spacing:0.12px;">Point Density</div>
<div class="t si" style="left:977px;top:529.0px;letter-spacing:0.12px;">Sky Texture</div>
<div class="t si" style="left:977px;top:547.95px;letter-spacing:0.12px;">Voronoi Texture</div>
<div class="t si" style="left:977px;top:566.9px;letter-spacing:0.12px;">Wave Texture</div>
<div class="t si" style="left:977px;top:585.85px;letter-spacing:0.12px;">White Noise Texture</div>
</body></html>
